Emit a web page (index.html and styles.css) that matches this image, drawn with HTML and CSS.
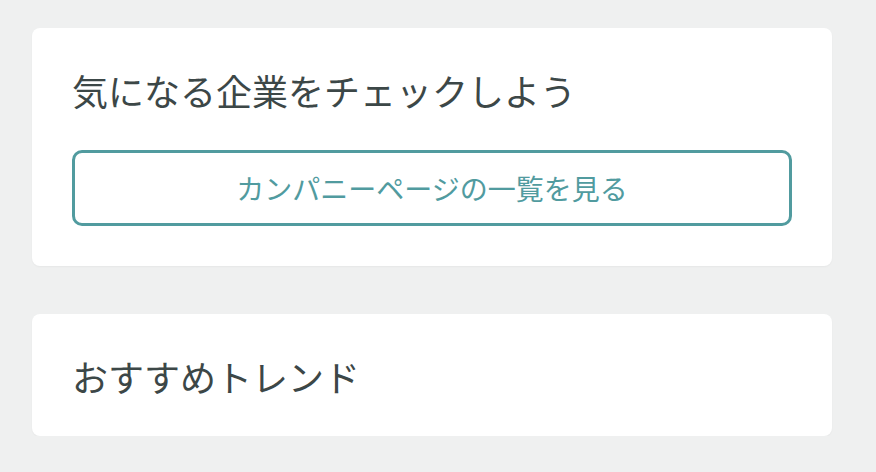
FILE: index.html
```html
<!DOCTYPE html>
<html lang="ja">
<head>
<meta charset="utf-8">
<title>サイドバー</title>
<link rel="stylesheet" href="styles.css">
</head>
<body>
<div class="side">
  <section class="card">
    <h2 class="card-title">気になる企業をチェックしよう</h2>
    <a class="btn-outline" href="#">カンパニーページの一覧を見る</a>
  </section>
  <section class="card">
    <h2 class="card-title">おすすめトレンド</h2>
  </section>
</div>
</body>
</html>
```
FILE: styles.css
```css
html, body {
	margin: 0;
	padding: 0;
}
body {
	background: #eff0f0;
	font-family: "Noto Sans CJK JP", "Noto Sans", sans-serif;
	color: #3c4747;
}
.side {
	width: 800px;
	padding: 28px 0 0 32px;
	display: flex;
	flex-direction: column;
	gap: 48px;
}
.card {
	background: #fff;
	border-radius: 8px;
	padding: 40px 40px 38px;
	box-shadow: 0 1px 2px rgba(0, 0, 0, 0.04);
}
.card-title {
	margin: 0;
	font-size: 36px;
	font-weight: 400;
	line-height: 44px;
}
.card-title + .btn-outline {
	margin-top: 38px;
}
.btn-outline {
	display: flex;
	align-items: center;
	justify-content: center;
	box-sizing: border-box;
	height: 76px;
	margin-bottom: 2px;
	border: 3px solid #519b9f;
	border-radius: 10px;
	color: #519b9f;
	font-size: 28px;
	text-decoration: none;
}
```
